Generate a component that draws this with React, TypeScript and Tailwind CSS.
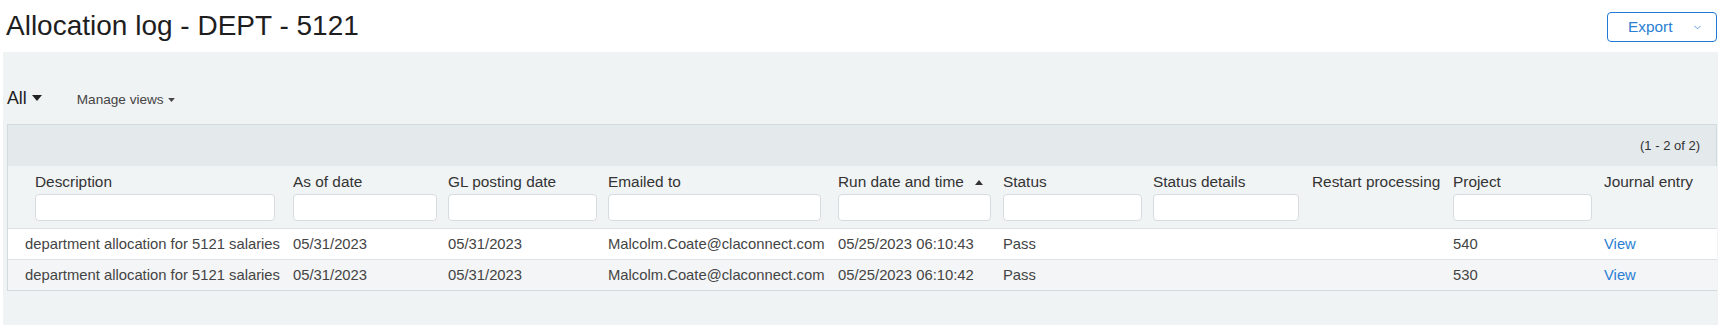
import { ChevronDown } from "lucide-react";

type Col = {
  label: string;
  w: string;
  th: string;
  input?: string;
  sort?: boolean;
};

const columns: Col[] = [
  { label: "Description", w: "w-[279px]", th: "pl-[27px]", input: "w-[240px]" },
  { label: "As of date", w: "w-[155px]", th: "pl-[6px]", input: "w-[144px]" },
  { label: "GL posting date", w: "w-[160px]", th: "pl-[6px]", input: "w-[149px]" },
  { label: "Emailed to", w: "w-[230px]", th: "pl-[6px]", input: "w-[213px]" },
  { label: "Run date and time", w: "w-[165px]", th: "pl-[6px]", input: "w-[153px]", sort: true },
  { label: "Status", w: "w-[150px]", th: "pl-[6px]", input: "w-[139px]" },
  { label: "Status details", w: "w-[159px]", th: "pl-[6px]", input: "w-[146px]" },
  { label: "Restart processing", w: "w-[141px]", th: "pl-[6px]" },
  { label: "Project", w: "w-[151px]", th: "pl-[6px]", input: "w-[139px]" },
  { label: "Journal entry", w: "w-[119px]", th: "pl-[6px]" },
];

const rows = [
  {
    desc: "department allocation for 5121 salaries",
    asOf: "05/31/2023",
    gl: "05/31/2023",
    email: "Malcolm.Coate@claconnect.com",
    run: "05/25/2023 06:10:43",
    status: "Pass",
    project: "540",
  },
  {
    desc: "department allocation for 5121 salaries",
    asOf: "05/31/2023",
    gl: "05/31/2023",
    email: "Malcolm.Coate@claconnect.com",
    run: "05/25/2023 06:10:42",
    status: "Pass",
    project: "530",
  },
];

function Caret({ className }: { className: string }) {
  return (
    <svg viewBox="0 0 10 6" className={className} fill="currentColor">
      <path d="M0 0h10L5 6z" />
    </svg>
  );
}

export default function App() {
  return (
    <div className="w-[1730px] h-[335px] bg-white font-['Liberation_Sans',Arial,sans-serif] text-[#333]">
      <div className="flex items-start justify-between pl-[6px] pr-[13px] h-[52px]">
        <h1 className="pt-[10px] text-[28px] leading-[32px] text-[#1e1e1e]">Allocation log - DEPT - 5121</h1>
        <button className="mt-[12px] h-[30px] w-[110px] flex items-center rounded-[4px] border border-[#1f7ad6] bg-white pl-[20px] text-[15.4px] text-[#2a7fd4]">
          Export
          <ChevronDown size={11} strokeWidth={1.6} className="ml-[20px] text-[#2a7fd4]" />
        </button>
      </div>

      <div className="ml-[3px] mr-[12px] h-[273px] bg-[#f0f3f4] pl-[4px] pr-[1px]">
        <div className="flex items-center h-[24px] translate-y-[34px]">
          <span className="text-[17.8px] leading-[24px] text-[#222]">All</span>
          <Caret className="ml-[5px] w-[10px] h-[6px] text-[#222]" />
          <span className="ml-[35px] mt-[3px] text-[13.6px] leading-[20px] text-[#444]">Manage views</span>
          <Caret className="ml-[4px] mt-[3px] w-[7px] h-[4px] text-[#444]" />
        </div>

        <div className="mt-[48px] border border-[#d3dadd]">
          <div className="h-[41px] bg-[#e4e9ec] flex items-center justify-end pr-[16px] text-[13px] text-[#333]">
            (1 - 2 of 2)
          </div>
          <table className="w-full table-fixed border-collapse leading-[20px]">
            <colgroup>
              {columns.map((c) => (
                <col key={c.label} className={c.w} />
              ))}
            </colgroup>
            <thead>
              <tr className="bg-[#f1f4f5] h-[62px] align-top text-[15.4px]">
                {columns.map((c) => (
                  <th key={c.label} className={`${c.th} pt-[6px] pb-[6px] text-left font-normal text-[#333] whitespace-nowrap`}>
                    <div className="flex items-center">
                      {c.label}
                      {c.sort && <Caret className="ml-[11px] w-[8px] h-[5px] rotate-180 text-[#333]" />}
                    </div>
                    {c.input && (
                      <input className={`${c.input} mt-[2px] h-[27px] block rounded-[4px] border border-[#d6dce0] bg-white`} />
                    )}
                  </th>
                ))}
              </tr>
            </thead>
            <tbody className="text-[#444] text-[14.8px]">
              {rows.map((r, i) => (
                <tr
                  key={i}
                  className={`${i === 0 ? "bg-white" : "bg-[#f3f5f6]"} border-t border-[#dce2e5] h-[31px]`}
                >
                  <td className="pl-[17px] whitespace-nowrap">{r.desc}</td>
                  <td className="pl-[6px] whitespace-nowrap">{r.asOf}</td>
                  <td className="pl-[6px] whitespace-nowrap">{r.gl}</td>
                  <td className="pl-[6px] whitespace-nowrap">{r.email}</td>
                  <td className="pl-[6px] whitespace-nowrap">{r.run}</td>
                  <td className="pl-[6px] whitespace-nowrap">{r.status}</td>
                  <td className="pl-[6px]"></td>
                  <td className="pl-[6px]"></td>
                  <td className="pl-[6px]">{r.project}</td>
                  <td className="pl-[6px]">
                    <a className="text-[#2a7fd4]">View</a>
                  </td>
                </tr>
              ))}
            </tbody>
          </table>
        </div>
      </div>
    </div>
  );
}
